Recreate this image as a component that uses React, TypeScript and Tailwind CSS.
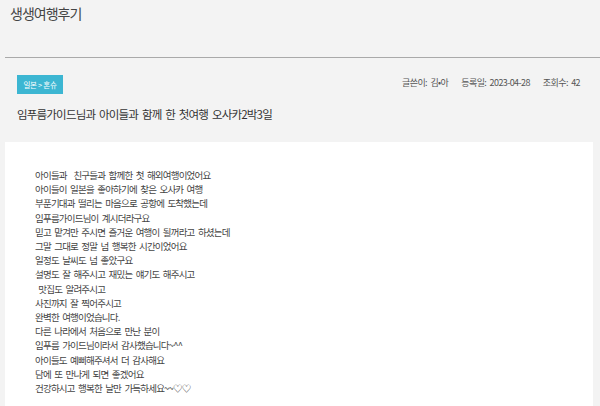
const FONT = "font-['Noto_Sans_CJK_KR','Noto_Sans',sans-serif]";

const LINES = [
  "아이들과  친구들과 함께한 첫 해외여행이었어요",
  "아이들이 일본을 좋아하기에 찾은 오사카 여행",
  "부푼기대과 떨리는 마음으로 공항에 도착했는데",
  "임푸름가이드님이 계시더라구요",
  "믿고 맡겨만 주시면 즐거운 여행이 될꺼라고 하셨는데",
  "그말 그대로 정말 넘 행복한 시간이었어요",
  "일정도 날씨도 넘 좋았구요",
  "설명도 잘 해주시고 재밌는 얘기도 해주시고",
  " 맛집도 알려주시고",
  "사진까지 잘 찍어주시고",
  "완벽한 여행이었습니다.",
  "다른 나라에서 처음으로 만난 분이",
  "임푸름 가이드님이라서 감사했습니다~^^",
  "아이들도 예뻐해주셔서 더 감사해요",
  "담에 또 만나게 되면 좋겠어요",
  "건강하시고 행복한 날만 가득하세요~~♡♡",
];

export default function App() {
  return (
    <div className={`w-[600px] h-[406px] overflow-hidden bg-[#f3f3f3] ${FONT}`}>
      {/* Board title */}
      <div className="pl-[6px] pt-[3px] h-[58px] border-b border-[#a9a9a9] ml-[5px] -indent-[1px]">
        <h1 className="text-[14px] leading-[20px] tracking-[-1px] text-[#444]">생생여행후기</h1>
      </div>

      {/* Post header */}
      <div className="px-[17px] pt-[17px]">
        <div className="flex items-center justify-between">
          <span className="bg-[#3cb6d2] text-white text-[7.5px] h-[19px] w-[46px] flex items-center justify-center tracking-[-0.3px]">
            일본 &gt; 혼슈
          </span>
          <div className="flex gap-[13px] text-[9px] tracking-[-0.6px] [word-spacing:2px] text-[#555] pr-[3px] -mt-[4px]">
            <span>글쓴이: 김•아</span>
            <span>등록일: 2023-04-28</span>
            <span>조회수: 42</span>
          </div>
        </div>
        <h2 className="mt-[12px] text-[11.5px] leading-[16px] tracking-[-0.8px] [word-spacing:2px] text-[#333]">
          임푸름가이드님과 아이들과 함께 한 첫여행 오사카2박3일
        </h2>
      </div>

      {/* Post body */}
      <div className="mt-[20px] mx-[5px] mr-[7px] bg-white h-[300px] pl-[30px] pt-[26px]">
        {LINES.map((l, i) => (
          <p key={i} className="text-[9.5px] leading-[14.2px] tracking-[-0.8px] [word-spacing:2px] text-[#444] whitespace-pre">
            {l}
          </p>
        ))}
      </div>
    </div>
  );
}
